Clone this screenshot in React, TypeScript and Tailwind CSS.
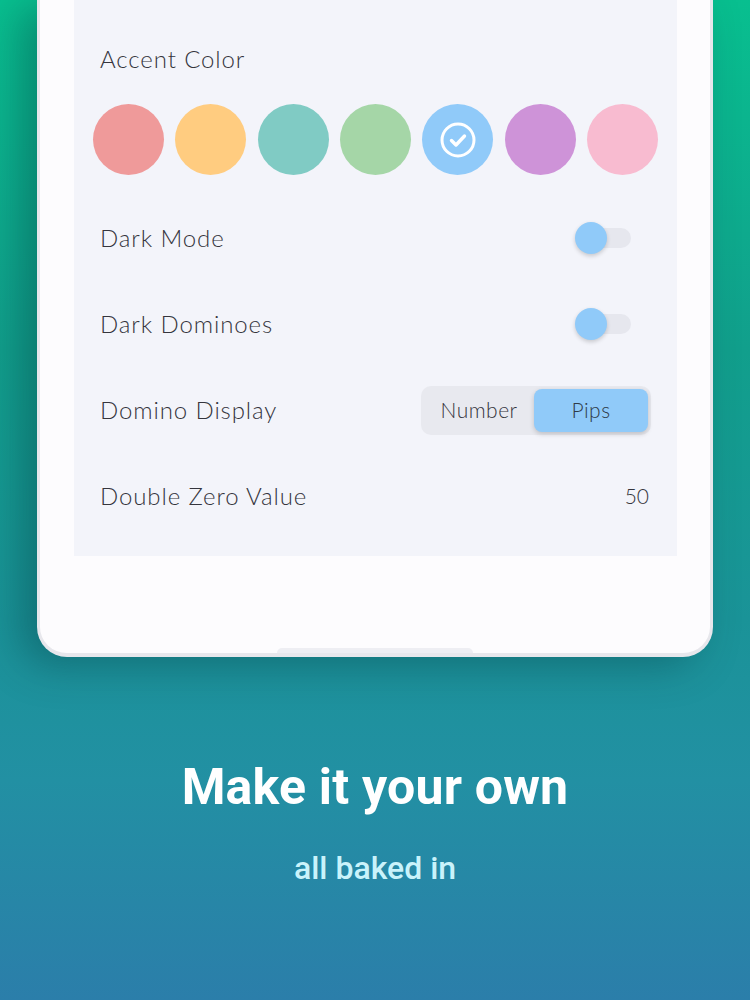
import React from 'react';

const accents = ['#ef9a9a', '#ffcc80', '#80cbc4', '#a5d6a7', '#90caf9', '#ce93d8', '#f8bbd0'];
const selectedAccent = 4;

const Toggle: React.FC = () => (
  <div className="relative w-[56px] h-[34px] flex items-center">
    <div className="ml-[4px] w-[52px] h-[20px] rounded-full bg-[#e6e7ee]" />
    <div className="absolute left-0 top-[1px] w-[32px] h-[32px] rounded-full bg-[#90caf9] shadow-[0_2px_4px_rgba(0,0,0,0.18)]" />
  </div>
);

const SettingRow: React.FC<{ label: string; children?: React.ReactNode }> = ({ label, children }) => (
  <div className="h-[86px] flex items-center justify-between pl-[26px] pr-[26px]">
    <span className="text-[24px] font-light text-[#35353d] tracking-[0.9px]">{label}</span>
    {children}
  </div>
);

export default function App() {
  return (
    <div
      className="w-[750px] h-[1000px] overflow-hidden flex flex-col bg-[linear-gradient(180deg,#08bf8f_0%,#119f8c_35%,#1a9398_62%,#2290a3_78%,#2b7eaa_100%)]"
      style={{ fontFamily: 'Lato, "Noto Sans", sans-serif' }}
    >
      {/* device */}
      <div className="mx-[37px] h-[657px] shrink-0 rounded-b-[30px] border-x-[3px] border-b-[4px] border-[#e7e7ec] bg-[#fdfcfe] shadow-[-16px_8px_40px_rgba(0,45,55,0.35)] flex flex-col">
        <div className="mx-[34px] mr-[33px] h-[556px] bg-[#f3f4fa] flex flex-col">
          <div className="pt-[44px] pl-[26px] text-[24px] leading-[30px] font-light text-[#35353d] tracking-[0.9px]">
            Accent Color
          </div>
          <div className="mt-[30px] px-[19px] flex justify-between">
            {accents.map((c, i) => (
              <div
                key={c}
                className="w-[71px] h-[71px] rounded-full flex items-center justify-center"
                style={{ backgroundColor: c }}
              >
                {i === selectedAccent && (
                  <svg width="38" height="38" viewBox="0 0 38 38" fill="none">
                    <circle cx="19" cy="19" r="16" stroke="white" strokeWidth="3" />
                    <path d="M12.5 19.5l4.5 4.5 8.5-9" stroke="white" strokeWidth="3.4" strokeLinecap="round" strokeLinejoin="round" />
                  </svg>
                )}
              </div>
            ))}
          </div>
          <div className="mt-[20px] flex flex-col">
            <SettingRow label="Dark Mode">
              <div className="mr-[20px]">
                <Toggle />
              </div>
            </SettingRow>
            <SettingRow label="Dark Dominoes">
              <div className="mr-[20px]">
                <Toggle />
              </div>
            </SettingRow>
            <SettingRow label="Domino Display">
              <div className="flex items-center w-[230px] h-[49px] rounded-[10px] bg-[#e8e9ef] p-[3px]">
                <div className="flex-1 text-center text-[21px] font-light text-[#35353d] tracking-[0.5px]">Number</div>
                <div className="w-[114px] h-full rounded-[8px] bg-[#90caf9] shadow-[0_2px_5px_rgba(0,0,0,0.18)] flex items-center justify-center text-[21px] font-light text-[#2f3a48] tracking-[0.5px]">
                  Pips
                </div>
              </div>
            </SettingRow>
            <SettingRow label="Double Zero Value">
              <span className="text-[21px] font-light text-[#35353d] mr-[2px]">50</span>
            </SettingRow>
          </div>
        </div>
        <div className="flex-1 flex items-end justify-center">
          <div className="w-[196px] h-[5px] rounded-t-full bg-[#eeeef3]" />
        </div>
      </div>

      {/* caption */}
      <div className="flex flex-col items-center" style={{ fontFamily: 'Roboto, "Liberation Sans", sans-serif' }}>
        <h1 className="mt-[102px] text-[50px] leading-[56px] font-bold text-white tracking-[0.2px]">
          Make it your own
        </h1>
        <p className="mt-[34px] text-[32px] leading-[38px] font-medium text-[#c9f3fb]">all baked in</p>
      </div>
    </div>
  );
}
